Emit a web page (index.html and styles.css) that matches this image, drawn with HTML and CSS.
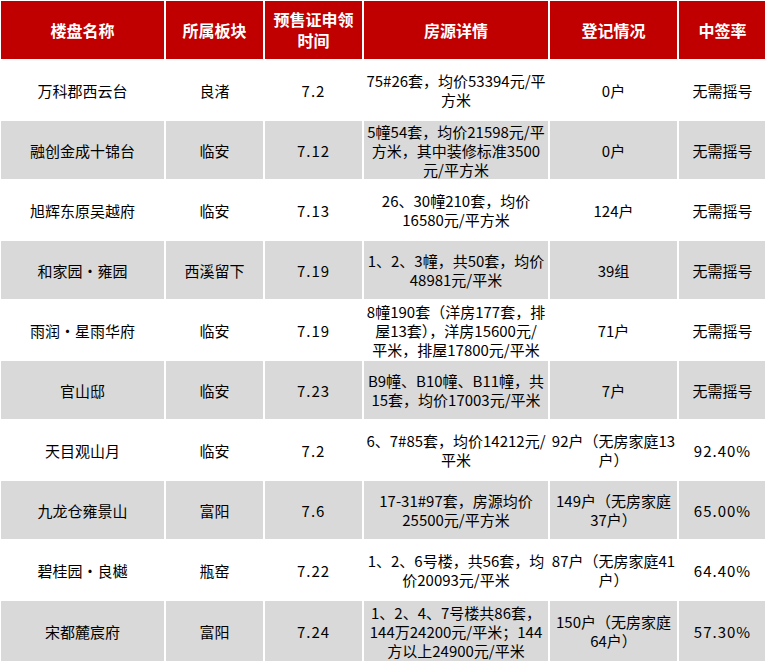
FILE: index.html
```html
<!DOCTYPE html>
<html lang="zh-CN">
<head>
<meta charset="utf-8">
<title>楼盘摇号情况</title>
<link rel="stylesheet" href="styles.css">
</head>
<body>
<table class="lottery">
  <colgroup>
    <col class="c-name">
    <col class="c-area">
    <col class="c-date">
    <col class="c-detail">
    <col class="c-reg">
    <col class="c-rate">
  </colgroup>
  <thead>
    <tr>
      <th>楼盘名称</th>
      <th>所属板块</th>
      <th>预售证申领<br>时间</th>
      <th>房源详情</th>
      <th>登记情况</th>
      <th>中签率</th>
    </tr>
  </thead>
  <tbody>
    <tr>
      <td>万科郡西云台</td><td>良渚</td><td class="num">7.2</td>
      <td>75#26套，均价53394元/平<br>方米</td><td>0户</td><td>无需摇号</td>
    </tr>
    <tr class="alt">
      <td>融创金成十锦台</td><td>临安</td><td class="num">7.12</td>
      <td>5幢54套，均价21598元/平<br>方米，其中装修标准3500<br>元/平方米</td><td>0户</td><td>无需摇号</td>
    </tr>
    <tr>
      <td>旭辉东原吴越府</td><td>临安</td><td class="num">7.13</td>
      <td>26、30幢210套，均价<br>16580元/平方米</td><td>124户</td><td>无需摇号</td>
    </tr>
    <tr class="alt">
      <td>和家园·雍园</td><td>西溪留下</td><td class="num">7.19</td>
      <td>1、2、3幢，共50套，均价<br>48981元/平米</td><td>39组</td><td>无需摇号</td>
    </tr>
    <tr>
      <td>雨润·星雨华府</td><td>临安</td><td class="num">7.19</td>
      <td>8幢190套（洋房177套，排<br>屋13套），洋房15600元/<br>平米，排屋17800元/平米</td><td>71户</td><td>无需摇号</td>
    </tr>
    <tr class="alt">
      <td>官山邸</td><td>临安</td><td class="num">7.23</td>
      <td>B9幢、B10幢、B11幢，共<br>15套，均价17003元/平米</td><td>7户</td><td>无需摇号</td>
    </tr>
    <tr>
      <td>天目观山月</td><td>临安</td><td class="num">7.2</td>
      <td>6、7#85套，均价14212元/<br>平米</td><td>92户（无房家庭13<br>户）</td><td class="num">92.40%</td>
    </tr>
    <tr class="alt">
      <td>九龙仓雍景山</td><td>富阳</td><td class="num">7.6</td>
      <td>17-31#97套，房源均价<br>25500元/平方米</td><td>149户（无房家庭<br>37户）</td><td class="num">65.00%</td>
    </tr>
    <tr>
      <td>碧桂园·良樾</td><td>瓶窑</td><td class="num">7.22</td>
      <td>1、2、6号楼，共56套，均<br>价20093元/平米</td><td>87户（无房家庭41<br>户）</td><td class="num">64.40%</td>
    </tr>
    <tr class="alt">
      <td>宋都麓宸府</td><td>富阳</td><td class="num">7.24</td>
      <td>1、2、4、7号楼共86套，<br>144万24200元/平米；144<br>方以上24900元/平米</td><td>150户（无房家庭<br>64户）</td><td class="num">57.30%</td>
    </tr>
  </tbody>
</table>
</body>
</html>
```

FILE: styles.css
```css
html, body {
  margin: 0;
  padding: 0;
  background: #ffffff;
  overflow: hidden;
}

.lottery {
  margin: -1px 0 0 -1px;
  border-collapse: separate;
  border-spacing: 2px;
  table-layout: fixed;
  width: 769px;
  font-family: "Noto Sans CJK SC", "Noto Sans", sans-serif;
  font-size: 15px;
  color: #000000;
}

.c-name { width: 163px; }
.c-area { width: 97px; }
.c-date { width: 97px; }
.c-detail { width: 184px; }
.c-reg { width: 127px; }
.c-rate { width: 87px; }

.lottery th,
.lottery td {
  padding: 0;
  text-align: center;
  vertical-align: middle;
  white-space: nowrap;
  overflow: hidden;
}

.lottery th {
  height: 58px;
  background: #c00000;
  color: #ffffff;
  font-weight: bold;
  font-size: 16px;
  line-height: 21px;
}

.lottery td {
  height: 58px;
  line-height: 19px;
  background: #ffffff;
}

.lottery tr.alt td {
  background: #d9d9d9;
}

.lottery tbody tr:last-child td {
  height: 60px;
}

.lottery .num {
  letter-spacing: 1px;
}
```
